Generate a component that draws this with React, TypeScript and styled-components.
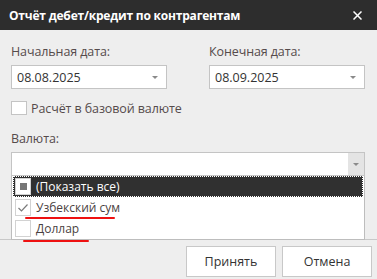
import React from "react";
import styled, { createGlobalStyle } from "styled-components";

const Global = createGlobalStyle`
  html, body { margin: 0; padding: 0; background: #eeeeee; }
  * { box-sizing: border-box; }
`;

const FONT = `"Open Sans", "Noto Sans", "Liberation Sans", sans-serif`;

const Dialog = styled.div`
  position: relative;
  width: 377px;
  height: 279px;
  overflow: hidden;
  background: #eeeeee;
  font-family: ${FONT};
  display: flex;
  flex-direction: column;
`;

const TitleBar = styled.div`
  height: 30px;
  flex: none;
  background: #2d2d2d;
  color: #ffffff;
  display: flex;
  align-items: center;
  justify-content: space-between;
  padding: 0 15px 0 9px;
  font-weight: 700;
  font-size: 12px;
  letter-spacing: -0.2px;
`;

const CloseBtn = styled.div`
  width: 9px;
  height: 9px;
  display: flex;
`;

const Body = styled.div`
  flex: 1;
  padding: 12px 12px 0 11px;
  display: flex;
  flex-direction: column;
`;

const DateRow = styled.div`
  display: grid;
  grid-template-columns: 156px 156px;
  column-gap: 42px;
`;

const Field = styled.div`
  display: flex;
  flex-direction: column;
`;

const Label = styled.div`
  font-size: 12.5px;
  letter-spacing: -0.1px;
  line-height: 18px;
  height: 23px;
  padding-top: 1px;
  color: #554b4b;
`;

const Input = styled.div`
  height: 24px;
  background: #ffffff;
  border: 1px solid #c4c4c4;
  display: flex;
  align-items: stretch;
  font-size: 12.5px;
  color: #333333;
`;

const InputText = styled.div`
  flex: 1;
  padding-left: 5px;
  display: flex;
  align-items: center;
`;

const ArrowBox = styled.div<{ $shaded?: boolean }>`
  width: ${(p) => (p.$shaded ? "16px" : "22px")};
  background: ${(p) => (p.$shaded ? "#e4e4e4" : "transparent")};
  display: flex;
  align-items: center;
  justify-content: center;
`;

const Arrow = styled.div`
  width: 0;
  height: 0;
  border-left: 3.5px solid transparent;
  border-right: 3.5px solid transparent;
  border-top: 3px solid #8a8a8a;
  margin-top: 1px;
`;

const CheckRow = styled.div`
  display: flex;
  align-items: center;
  gap: 4px;
  margin-top: 12px;
  height: 14px;
  font-size: 12.5px;
  letter-spacing: -0.1px;
  color: #554b4b;
`;

const Box = styled.div`
  width: 16px;
  height: 14px;
  background: #ffffff;
  border: 1px solid #c4c4c4;
`;

const CurrencyLabel = styled(Label)`
  margin-top: 14px;
`;

const ComboWrap = styled.div`
  position: relative;
  width: 354px;
`;

const DropList = styled.div`
  position: absolute;
  left: 0;
  top: 24px;
  width: 354px;
  height: 64px;
  background: #ffffff;
  border: 1px solid #bdbdbd;
  border-top: none;
  z-index: 2;
  padding: 0 0 0 1px;
`;

const Row = styled.div<{ $active?: boolean }>`
  height: 21px;
  display: flex;
  align-items: center;
  gap: 5px;
  padding-left: 2px;
  font-size: 12px;
  background: ${(p) => (p.$active ? "#303030" : "#ffffff")};
  color: ${(p) => (p.$active ? "#ffffff" : "#4a3f3f")};
  outline: ${(p) => (p.$active ? "1px dotted #ffffff" : "none")};
  outline-offset: -1px;
  margin-right: 1px;
`;

const ItemBox = styled.div`
  width: 16px;
  height: 17px;
  background: #ffffff;
  border: 1px solid #d2d2d2;
  display: flex;
  align-items: center;
  justify-content: center;
`;

const Indeterminate = styled.div`
  width: 7px;
  height: 7px;
  background: #777777;
`;

const Marked = styled.span`
  position: relative;
`;

const RedLine = styled.div<{ $left: number; $width: number; $bottom: number }>`
  position: absolute;
  left: ${(p) => p.$left}px;
  width: ${(p) => p.$width}px;
  bottom: ${(p) => p.$bottom}px;
  height: 2px;
  background: #ee1111;
  border-radius: 1px;
`;

const Footer = styled.div`
  height: 40px;
  flex: none;
  border-top: 1px solid #c8c8c8;
  display: flex;
  justify-content: flex-end;
  align-items: flex-start;
  gap: 6px;
  padding: 6px 5px 0 0;
`;

const Button = styled.div`
  width: 90px;
  height: 31px;
  background: #ffffff;
  border: 1px solid #c8c8c8;
  display: flex;
  align-items: center;
  justify-content: center;
  font-size: 12.5px;
  color: #333333;
`;

export default function App() {
  return (
    <>
      <Global />
      <Dialog>
        <TitleBar>
          <span>Отчёт дебет/кредит по контрагентам</span>
          <CloseBtn>
            <svg width="9" height="9" viewBox="0 0 9 9">
              <path d="M0.5 0.5 L8.5 8.5 M8.5 0.5 L0.5 8.5" stroke="#ffffff" strokeWidth="1.5" />
            </svg>
          </CloseBtn>
        </TitleBar>
        <Body>
          <DateRow>
            <Field>
              <Label>Начальная дата:</Label>
              <Input>
                <InputText>08.08.2025</InputText>
                <ArrowBox>
                  <Arrow />
                </ArrowBox>
              </Input>
            </Field>
            <Field>
              <Label>Конечная дата:</Label>
              <Input>
                <InputText>08.09.2025</InputText>
                <ArrowBox>
                  <Arrow />
                </ArrowBox>
              </Input>
            </Field>
          </DateRow>
          <CheckRow>
            <Box />
            <span>Расчёт в базовой валюте</span>
          </CheckRow>
          <CurrencyLabel>Валюта:</CurrencyLabel>
          <ComboWrap>
            <Input>
              <InputText />
              <ArrowBox $shaded>
                <Arrow />
              </ArrowBox>
            </Input>
            <DropList>
              <Row $active>
                <ItemBox>
                  <Indeterminate />
                </ItemBox>
                <span>(Показать все)</span>
              </Row>
              <Row>
                <ItemBox>
                  <svg width="12" height="10" viewBox="0 0 12 10">
                    <path d="M1.5 5 L4.5 8 L10.5 1.5" stroke="#7a7a7a" strokeWidth="1.2" fill="none" />
                  </svg>
                </ItemBox>
                <Marked>
                  Узбекский сум
                  <RedLine $left={-11} $width={90} $bottom={-3} />
                </Marked>
              </Row>
              <Row>
                <ItemBox />
                <Marked>
                  Доллар
                  <RedLine $left={-13} $width={66} $bottom={-5} />
                </Marked>
              </Row>
            </DropList>
          </ComboWrap>
        </Body>
        <Footer>
          <Button>Принять</Button>
          <Button>Отмена</Button>
        </Footer>
      </Dialog>
    </>
  );
}
